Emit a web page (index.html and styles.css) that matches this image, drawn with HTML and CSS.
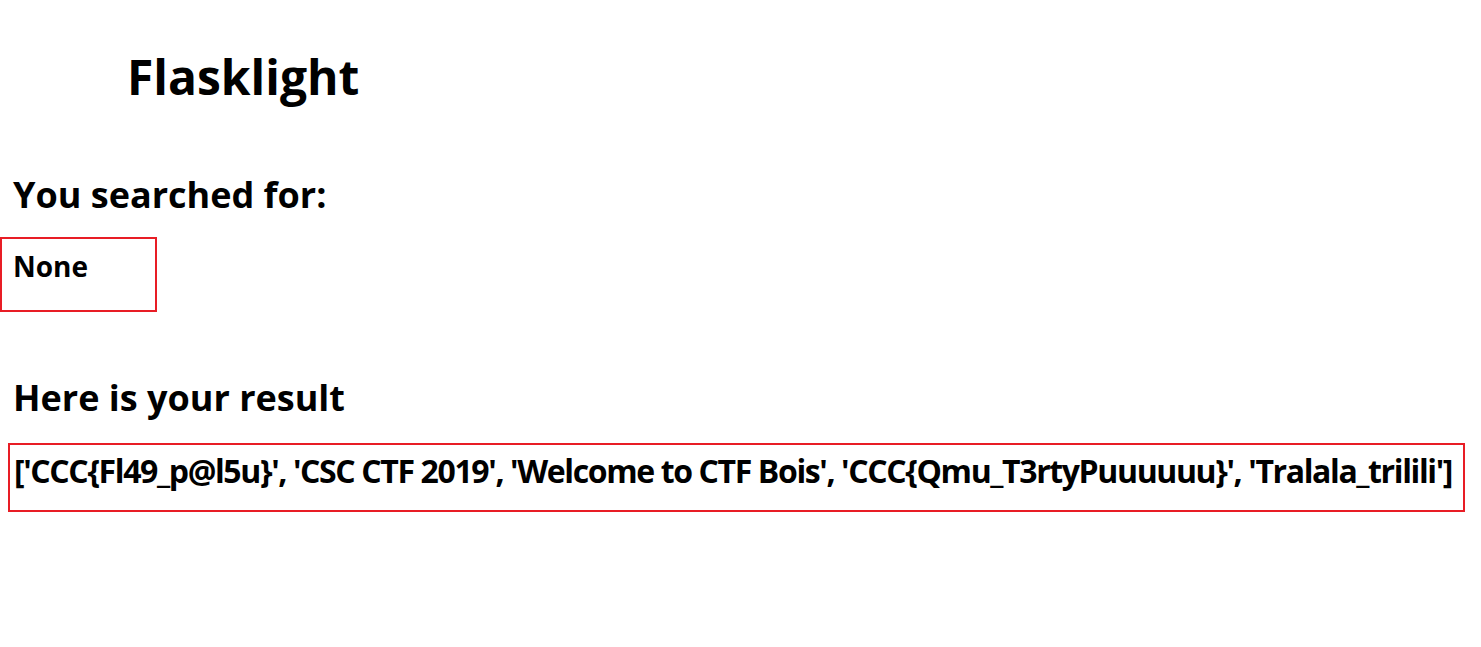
FILE: index.html
```html
<!DOCTYPE html>
<html lang="en">
<head>
<meta charset="utf-8">
<title>Flasklight</title>
<link rel="stylesheet" href="styles.css">
</head>
<body>
<h1 class="title">Flasklight</h1>
<h2 class="heading heading-search">You searched for:</h2>
<div class="box box-query">
  <h3 class="query">None</h3>
</div>
<h2 class="heading heading-result">Here is your result</h2>
<div class="box box-result">
  <h3 class="result">['CCC{Fl49_p@l5u}', 'CSC CTF 2019', 'Welcome to CTF Bois', 'CCC{Qmu_T3rtyPuuuuuu}', 'Tralala_trilili']</h3>
</div>
</body>
</html>
```

FILE: styles.css
```css
html, body {
  margin: 0;
  padding: 0;
  background: #ffffff;
  color: #000000;
  font-family: "Open Sans", "Noto Sans", sans-serif;
  font-weight: 700;
}

.title {
  margin: 47px 0 0 127px;
  font-size: 48px;
  line-height: 60px;
  font-weight: 700;
  white-space: nowrap;
}

.heading {
  margin: 0 0 0 13px;
  font-size: 36px;
  line-height: 44px;
  font-weight: 700;
  white-space: nowrap;
}

.heading-search {
  margin-top: 66px;
}

.heading-result {
  margin-top: 64px;
}

.box {
  border: 2px solid #e81d25;
  box-sizing: border-box;
}

.box-query {
  width: 157px;
  height: 75px;
  margin-top: 20px;
  padding: 10px 0 0 11px;
}

.box-result {
  width: 1457px;
  height: 69px;
  margin: 23px 0 0 8px;
  padding: 6px 0 0 4px;
}

.query {
  margin: 0;
  font-size: 28px;
  line-height: 34px;
  font-weight: 700;
}

.result {
  margin: 0;
  font-size: 32px;
  line-height: 40px;
  font-weight: 700;
  letter-spacing: -1.38px;
  white-space: nowrap;
}
```
